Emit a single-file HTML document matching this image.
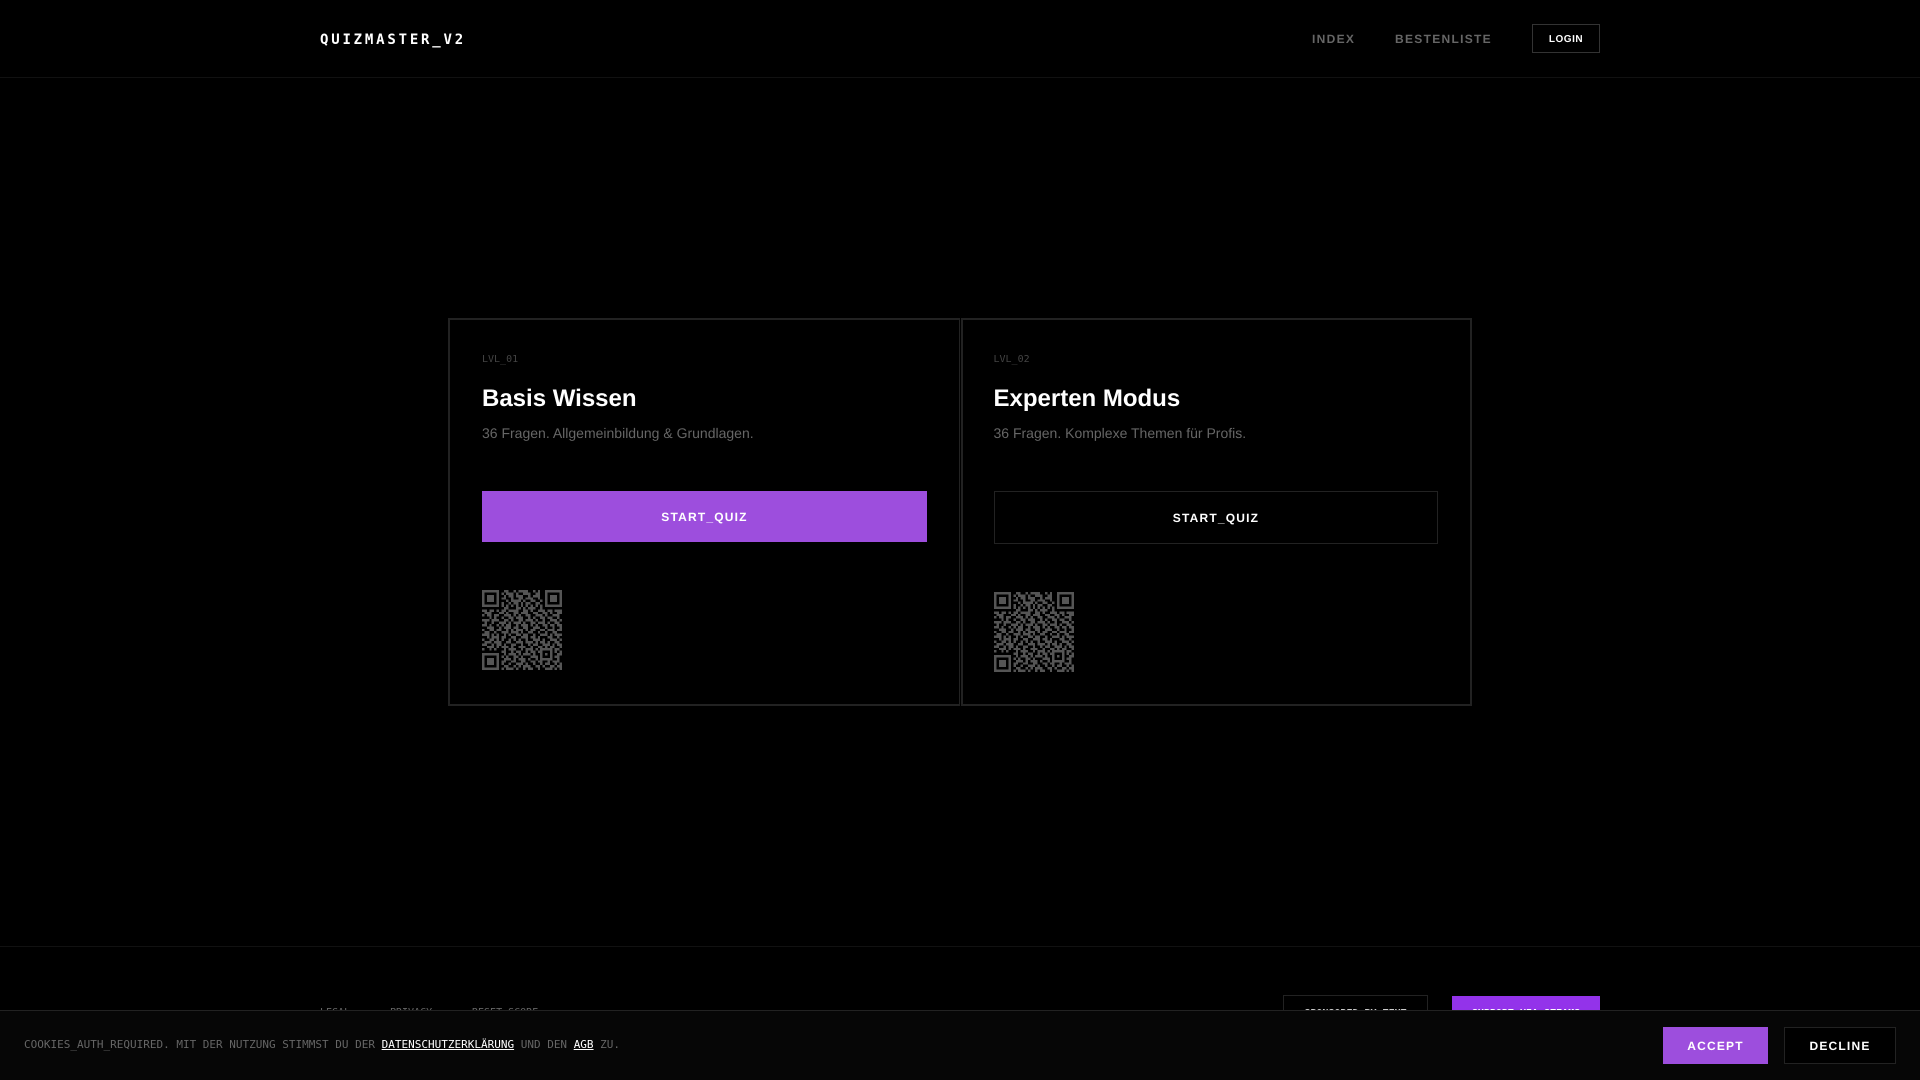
<!DOCTYPE html>
<html lang="de">
<head>
<meta charset="utf-8">
<title>QUIZMASTER_V2</title>
<style>
*{box-sizing:border-box;margin:0;padding:0}
html,body{width:1920px;height:1080px;overflow:hidden;background:#000}
body{position:relative;font-family:"Liberation Sans",sans-serif;color:#fff;text-rendering:geometricPrecision}
.a{position:absolute;white-space:nowrap}
.m{font-family:"DejaVu Sans Mono",monospace;text-rendering:auto}
.hr{position:absolute;left:0;width:1920px;height:1px;background:#111}
.card{position:absolute;top:318px;height:388px;border:2px solid #222}
.lvl{font-size:10px;line-height:15px;top:352px;color:#444}
h3{font-size:24px;line-height:32px;top:383px;font-weight:700;color:#fff}
.d{font-size:14px;line-height:20px;top:423px;color:#666}
.b{text-align:center;font-size:12px;font-weight:700;letter-spacing:1.2px}
.qr{position:absolute;width:80px;height:80px}
.f{font-size:10px;line-height:15px;top:1005px;color:#666}
#banner{position:absolute;left:0;top:1010px;width:1920px;height:70px;background:#060606;border-top:1px solid #222}
#banner a{color:#fff;text-decoration:underline}
</style>
</head>
<body>
<svg width="0" height="0" style="position:absolute">
<defs>
<g id="q" shape-rendering="crispEdges">
<path fill="#555" fill-rule="evenodd" d="M0 0h7v7h-7zM1 1v5h5v-5zM2 2h3v3h-3zM26 0h7v7h-7zM27 1v5h5v-5zM28 2h3v3h-3zM0 26h7v7h-7zM1 27v5h5v-5zM2 28h3v3h-3z"/>
<path fill="none" stroke="#555" stroke-width="1" d="M9 .5h2M13 .5h1M15 .5h4M21 .5h1M23 .5h1M8 1.5h1M10 1.5h3M14 1.5h1M17 1.5h3M22 1.5h2M9 2.5h1M11 2.5h2M14 2.5h3M19 2.5h1M21 2.5h3M8 3.5h2M12 3.5h1M15 3.5h2M18 3.5h3M23 3.5h1M10 4.5h1M12 4.5h4M17 4.5h1M20 4.5h2M24 4.5h1M8 5.5h1M11 5.5h1M13 5.5h2M16 5.5h1M18 5.5h2M22 5.5h2M8 6.5h1M10 6.5h1M12 6.5h1M14 6.5h1M16 6.5h1M18 6.5h1M20 6.5h1M22 6.5h1M24 6.5h1M9 7.5h2M14 7.5h2M17 7.5h1M19 7.5h3M24 7.5h1M0 8.5h2M3 8.5h2M6 8.5h1M8 8.5h2M11 8.5h4M17 8.5h2M20 8.5h1M23 8.5h3M27 8.5h2M30 8.5h3M1 9.5h3M7 9.5h2M10 9.5h1M13 9.5h2M16 9.5h3M21 9.5h2M25 9.5h2M28 9.5h1M31 9.5h2M0 10.5h1M2 10.5h2M5 10.5h2M9 10.5h3M13 10.5h1M15 10.5h1M18 10.5h2M22 10.5h3M26 10.5h1M29 10.5h3M3 11.5h1M5 11.5h1M8 11.5h1M11 11.5h2M14 11.5h3M19 11.5h1M21 11.5h1M24 11.5h2M27 11.5h2M31 11.5h1M0 12.5h3M4 12.5h3M9 12.5h2M12 12.5h1M15 12.5h2M18 12.5h3M22 12.5h1M25 12.5h1M28 12.5h3M32 12.5h1M1 13.5h1M4 13.5h1M7 13.5h3M11 13.5h1M13 13.5h3M17 13.5h1M20 13.5h2M23 13.5h3M27 13.5h1M30 13.5h2M0 14.5h2M3 14.5h1M6 14.5h1M8 14.5h1M10 14.5h2M14 14.5h1M16 14.5h3M20 14.5h1M22 14.5h1M25 14.5h2M28 14.5h2M31 14.5h2M2 15.5h3M7 15.5h1M9 15.5h3M13 15.5h2M17 15.5h2M21 15.5h3M26 15.5h1M29 15.5h1M32 15.5h1M0 16.5h1M3 16.5h2M6 16.5h2M10 16.5h1M12 16.5h1M14 16.5h3M18 16.5h1M20 16.5h2M24 16.5h2M27 16.5h3M31 16.5h2M1 17.5h2M5 17.5h1M8 17.5h3M12 17.5h3M16 17.5h1M19 17.5h2M23 17.5h1M26 17.5h1M29 17.5h2M0 18.5h3M4 18.5h1M6 18.5h1M9 18.5h1M11 18.5h1M14 18.5h2M17 18.5h2M21 18.5h1M24 18.5h3M28 18.5h1M30 18.5h3M2 19.5h1M4 19.5h3M8 19.5h2M12 19.5h2M16 19.5h3M20 19.5h2M23 19.5h1M27 19.5h2M31 19.5h1M0 20.5h1M3 20.5h2M6 20.5h1M8 20.5h1M11 20.5h1M13 20.5h1M15 20.5h1M18 20.5h1M21 20.5h3M25 20.5h1M28 20.5h3M32 20.5h1M1 21.5h3M5 21.5h3M10 21.5h2M14 21.5h3M18 21.5h3M22 21.5h1M24 21.5h2M27 21.5h1M30 21.5h2M0 22.5h2M4 22.5h1M6 22.5h2M9 22.5h1M12 22.5h2M16 22.5h1M19 22.5h1M21 22.5h2M25 22.5h3M29 22.5h1M31 22.5h2M2 23.5h3M6 23.5h1M8 23.5h3M12 23.5h1M15 23.5h3M20 23.5h1M23 23.5h2M26 23.5h1M28 23.5h2M32 23.5h1M0 24.5h1M3 24.5h1M5 24.5h1M9 24.5h1M11 24.5h3M16 24.5h1M18 24.5h3M22 24.5h1M24 24.5h5M30 24.5h2M8 25.5h2M12 25.5h1M14 25.5h2M18 25.5h1M20 25.5h2M23 25.5h2M28 25.5h1M30 25.5h1M32 25.5h1M9 26.5h1M11 26.5h3M15 26.5h1M17 26.5h3M21 26.5h1M24 26.5h1M26 26.5h1M28 26.5h1M31 26.5h2M8 27.5h1M10 27.5h1M13 27.5h2M16 27.5h1M20 27.5h3M24 27.5h1M28 27.5h1M30 27.5h2M9 28.5h3M13 28.5h1M15 28.5h3M19 28.5h1M22 28.5h1M24 28.5h5M31 28.5h1M8 29.5h2M12 29.5h2M16 29.5h2M20 29.5h2M23 29.5h2M27 29.5h1M29 29.5h3M8 30.5h1M11 30.5h1M14 30.5h3M18 30.5h1M21 30.5h1M24 30.5h1M26 30.5h2M30 30.5h1M32 30.5h1M9 31.5h2M13 31.5h1M15 31.5h1M17 31.5h3M22 31.5h2M25 31.5h1M28 31.5h2M31 31.5h2M8 32.5h1M10 32.5h3M14 32.5h1M17 32.5h1M19 32.5h2M23 32.5h1M26 32.5h3M30 32.5h1M32 32.5h1"/>
</g>
</defs>
</svg>

<div class="a m" style="left:320px;top:30px;font-size:14px;line-height:20px;font-weight:700;letter-spacing:2.8px">QUIZMASTER_V2</div>
<div class="a" style="left:1312px;top:29px;font-size:12px;line-height:20px;font-weight:700;letter-spacing:1.3px;color:#666">INDEX</div>
<div class="a" style="left:1395px;top:29px;font-size:12px;line-height:20px;font-weight:700;letter-spacing:1.3px;color:#666">BESTENLISTE</div>
<div class="a" style="left:1532px;top:24px;width:68px;height:29px;border:1px solid #333;text-align:center;font-size:10px;line-height:29px;font-weight:700;letter-spacing:0.5px">LOGIN</div>
<div class="hr" style="top:77px"></div>

<div class="card" style="left:448px;width:512px;border-right-width:1px"></div>
<div class="card" style="left:961px;width:511px"></div>

<div class="a m lvl" style="left:482px">LVL_01</div>
<h3 class="a" style="left:482px">Basis Wissen</h3>
<div class="a d" style="left:482px">36 Fragen. Allgemeinbildung &amp; Grundlagen.</div>
<div class="a b" style="left:482px;top:491px;width:445px;height:51px;line-height:53px;background:#9d4edd">START_QUIZ</div>
<svg class="qr" style="left:482px;top:590px" viewBox="0 0 33 33"><use href="#q"/></svg>

<div class="a m lvl" style="left:993.5px">LVL_02</div>
<h3 class="a" style="left:993.5px">Experten Modus</h3>
<div class="a d" style="left:993.5px">36 Fragen. Komplexe Themen für Profis.</div>
<div class="a b" style="left:994px;top:491px;width:444px;height:53px;line-height:53px;border:1px solid #222">START_QUIZ</div>
<svg class="qr" style="left:994px;top:592px" viewBox="0 0 33 33"><use href="#q"/></svg>

<div class="hr" style="top:946px"></div>
<div class="a m f" style="left:320px">LEGAL</div>
<div class="a m f" style="left:390px">PRIVACY</div>
<div class="a m f" style="left:472px">RESET_SCORE</div>
<div class="a m" style="left:1283px;top:995px;width:145px;height:40px;border:1px solid #222;text-align:center;font-size:10px;line-height:35px;font-weight:700;color:#ccc">SPONSORED_BY_TEXT</div>
<div class="a m" style="left:1452px;top:996px;width:148px;height:40px;background:#9333ea;text-align:center;font-size:10px;line-height:35px;font-weight:700">SUPPORT_VIA_STEAMS</div>

<div id="banner">
<div class="a m" style="left:24px;top:26px;font-size:11px;line-height:16px;color:#666">COOKIES_AUTH_REQUIRED. MIT DER NUTZUNG STIMMST DU DER <a>DATENSCHUTZERKLÄRUNG</a> UND DEN <a>AGB</a> ZU.</div>
<div class="a" style="left:1663px;top:16px;width:105px;height:37px;background:#9d4edd;text-align:center;font-size:12px;line-height:38px;font-weight:700;letter-spacing:1.2px">ACCEPT</div>
<div class="a" style="left:1784px;top:16px;width:112px;height:37px;border:1px solid #222;background:#000;text-align:center;font-size:12px;line-height:36px;font-weight:700;letter-spacing:1.2px">DECLINE</div>
</div>
</body>
</html>
